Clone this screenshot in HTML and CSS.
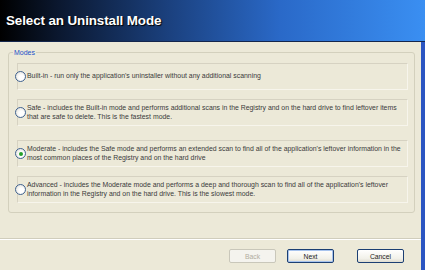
FILE: index.html
```html
<!DOCTYPE html>
<html lang="en">
<head>
    <meta charset="UTF-8">
    <meta name="viewport" content="width=device-width, initial-scale=1.0">
    <link rel="stylesheet" href="styles.css">
</head>
<body>
    <div class="window">
        <header class="banner">
            <h1 class="banner-title">Select an Uninstall Mode</h1>
        </header>
        <main class="content">
            <fieldset class="modes">
                <legend class="modes-label">Modes</legend>
                <label class="mode">
                    <input type="radio" name="mode" class="mode-radio">
                    <span class="mode-text">Built-in - run only the application's uninstaller without any additional scanning</span>
                </label>
                <label class="mode">
                    <input type="radio" name="mode" class="mode-radio">
                    <span class="mode-text">Safe - includes the Built-in mode and performs additional scans in the Registry and on the hard drive to find leftover items<br>that are safe to delete. This is the fastest mode.</span>
                </label>
                <label class="mode mode-wide">
                    <input type="radio" name="mode" class="mode-radio" checked>
                    <span class="mode-text">Moderate - includes the Safe mode and performs an extended scan to find all of the application's leftover information in the<br>most common places of the Registry and on the hard drive</span>
                </label>
                <label class="mode">
                    <input type="radio" name="mode" class="mode-radio">
                    <span class="mode-text">Advanced - includes the Moderate mode and performs a deep and thorough scan to find all of the application's leftover<br>information in the Registry and on the hard drive. This is the slowest mode.</span>
                </label>
            </fieldset>
        </main>
        <footer class="actions">
            <button class="btn" disabled>Back</button>
            <button class="btn btn-default">Next</button>
            <button class="btn btn-cancel">Cancel</button>
        </footer>
    </div>
</body>
</html>
```

FILE: styles.css
```css
body {
   margin: 0;
   font-family: "Liberation Sans", Arial, sans-serif;
   background: #ece9d8;
}
.window {
   width: 421px;
   height: 270px;
   display: flex;
   flex-direction: column;
   border-right: 4px solid #2b55c2;
   background: #ece9d8;
}
.banner {
   height: 41px;
   display: flex;
   align-items: center;
   padding-left: 6px;
   background: linear-gradient(to right, #000 0%, #0b1830 14%, #1b417f 40%, #2a69c8 66%, #3a8ff2 100%);
   border-bottom: 1px solid #14264c;
   margin-right: -4px;
}
.banner-title {
   margin: 0;
   font-size: 13.4px;
   font-weight: bold;
   color: #fff;
   text-shadow: 1px 1px 1px #000;
   letter-spacing: -0.1px;
}
.content {
   padding: 7px 6px 0 8px;
}
.modes {
   margin: 0;
   padding: 7px 6px 9px 7px;
   border: 1px solid #d3d0bd;
   border-radius: 3px;
   display: flex;
   flex-direction: column;
   gap: 9px;
}
.modes-label {
   padding: 0 1px;
   margin-left: -3px;
   font-size: 7px;
   color: #1d50c8;
}
.mode {
   display: flex;
   align-items: center;
   height: 25px;
   border: 1px solid #d6d2c2;
   border-right-color: #f7f5ec;
   border-bottom-color: #f7f5ec;
   margin-left: 1px;
}
.mode-wide {
   margin-top: 5px;
}
.mode-radio {
   appearance: none;
   margin: 0 1px 0 -3px;
   width: 11px;
   height: 11px;
   flex-shrink: 0;
   border: 1px solid #3f6290;
   border-radius: 50%;
   background: radial-gradient(circle at 60% 60%, #fff 30%, #dcdad0 100%);
   display: flex;
   align-items: center;
   justify-content: center;
}
.mode-radio:checked::after {
   content: "";
   width: 4px;
   height: 4px;
   border-radius: 50%;
   background: #25a02a;
}
.mode-text {
   font-size: 6.9px;
   line-height: 8.8px;
   color: #3a3a3a;
   white-space: nowrap;
}
.actions {
   margin-top: auto;
   height: 32px;
   box-sizing: border-box;
   display: flex;
   justify-content: flex-end;
   align-items: flex-start;
   padding: 10px 17px 0 0;
   border-top: 1px solid #d0cdbc;
   box-shadow: inset 0 1px 0 #fff;
}
.btn {
   width: 47px;
   height: 14px;
   margin-left: 11px;
   padding: 0;
   font-family: inherit;
   font-size: 6.8px;
   color: #222;
   border: 1px solid #1c3f73;
   border-radius: 2px;
   background: linear-gradient(#fff, #f2f1ea 70%, #dedcd0);
}
.btn:disabled {
   color: #b0ad9e;
   border-color: #c9c7ba;
   background: #f4f3ee;
}
.btn-default {
   box-shadow: inset 0 0 0 1px #a8c4ee;
}
.btn-cancel {
   margin-left: 23px;
}
```
